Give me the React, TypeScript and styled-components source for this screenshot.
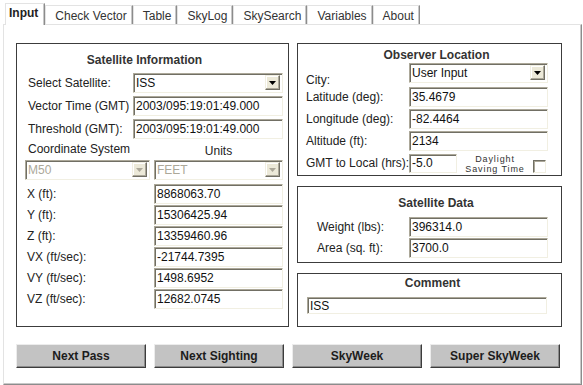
import styled, { createGlobalStyle } from 'styled-components'

const GlobalStyle = createGlobalStyle`
  html, body {
    margin: 0;
    padding: 0;
    background: #ffffff;
  }
  body {
    font-family: 'Liberation Sans', Arial, sans-serif;
    font-size: 12px;
    color: #222222;
  }
  * {
    box-sizing: border-box;
  }
`

const TABS = ['Input', 'Check Vector', 'Table', 'SkyLog', 'SkySearch', 'Variables', 'About']

const SATELLITE_ROWS = [
  { label: 'Vector Time (GMT)', value: '2003/095:19:01:49.000' },
  { label: 'Threshold (GMT):', value: '2003/095:19:01:49.000' },
]

const VECTOR_ROWS = [
  { label: 'X (ft):', value: '8868063.70' },
  { label: 'Y (ft):', value: '15306425.94' },
  { label: 'Z (ft):', value: '13359460.96' },
  { label: 'VX (ft/sec):', value: '-21744.7395' },
  { label: 'VY (ft/sec):', value: '1498.6952' },
  { label: 'VZ (ft/sec):', value: '12682.0745' },
]

const OBSERVER_ROWS = [
  { label: 'Latitude (deg):', value: '35.4679' },
  { label: 'Longitude (deg):', value: '-82.4464' },
  { label: 'Altitude (ft):', value: '2134' },
]

const BUTTONS = ['Next Pass', 'Next Sighting', 'SkyWeek', 'Super SkyWeek']

function Select({ value, disabled = false }: { value: string; disabled?: boolean }) {
  return (
    <SelectBox disabled={disabled}>
      <SelectText>{value}</SelectText>
      <ArrowButton>
        <svg width="7" height="4" viewBox="0 0 7 4">
          <path d="M0 0h7L3.5 4z" fill={disabled ? '#aca899' : '#000'} />
        </svg>
      </ArrowButton>
    </SelectBox>
  )
}

export default function App() {
  return (
    <Window>
      <GlobalStyle />
      <TabStrip>
        {TABS.map((tab, i) => (
          <Tab key={tab} active={i === 0}>
            {tab}
          </Tab>
        ))}
      </TabStrip>
      <Panel>
        <Columns>
          <Box>
            <Title shift={-16} top={9}>
              Satellite Information
            </Title>
            <SatGrid>
              <Label>Select Satellite:</Label>
              <Select value="ISS" />
              {SATELLITE_ROWS.map((row) => (
                <Row key={row.label}>
                  <Label>{row.label}</Label>
                  <Field readOnly value={row.value} />
                </Row>
              ))}
            </SatGrid>
            <CoordGrid>
              <Label>Coordinate System</Label>
              <UnitsLabel>Units</UnitsLabel>
              <Select value="M50" disabled />
              <Select value="FEET" disabled />
            </CoordGrid>
            <VectorGrid>
              {VECTOR_ROWS.map((row) => (
                <Row key={row.label}>
                  <Label>{row.label}</Label>
                  <Field readOnly value={row.value} />
                </Row>
              ))}
            </VectorGrid>
          </Box>

          <RightColumn>
            <Box height={133}>
              <Title shift={14} top={4}>
                Observer Location
              </Title>
              <ObserverGrid>
                <CityLabel>City:</CityLabel>
                <Select value="User Input" />
                {OBSERVER_ROWS.map((row) => (
                  <Row key={row.label}>
                    <Label>{row.label}</Label>
                    <Field readOnly value={row.value} />
                  </Row>
                ))}
                <Label>GMT to Local (hrs):</Label>
                <GmtCell>
                  <ShortField readOnly value="-5.0" />
                  <DaylightText>
                    <span>Daylight</span>
                    <span>Saving Time</span>
                  </DaylightText>
                  <CheckBox />
                </GmtCell>
              </ObserverGrid>
            </Box>

            <Box height={77}>
              <Title shift={13} top={9}>
                Satellite Data
              </Title>
              <DataGrid>
                <Label>Weight (lbs):</Label>
                <Field readOnly value="396314.0" />
                <Label>Area (sq. ft):</Label>
                <Field readOnly value="3700.0" />
              </DataGrid>
            </Box>

            <Box height={54}>
              <Title shift={6} top={2}>
                Comment
              </Title>
              <CommentField readOnly value="ISS" />
            </Box>
          </RightColumn>
        </Columns>

        <ButtonRow>
          {BUTTONS.map((label) => (
            <ActionButton key={label}>{label}</ActionButton>
          ))}
        </ButtonRow>
      </Panel>
    </Window>
  )
}

const Window = styled.div`
  width: 583px;
  height: 385px;
  background: #ffffff;
  overflow: hidden;
`

const TabStrip = styled.div`
  display: flex;
  align-items: flex-end;
  height: 24px;
  padding-left: 5px;
  position: relative;
  z-index: 1;
`

const Tab = styled.div<{ active: boolean }>`
  height: ${({ active }) => (active ? 22 : 19)}px;
  margin-bottom: ${({ active }) => (active ? -1 : 0)}px;
  padding: ${({ active }) => (active ? '2px 6px 0 3px' : '3px 5px 0 9px')};
  background: #ffffff;
  border-top: 1px solid #e3e3e3;
  border-left: 1px solid #e3e3e3;
  border-right: 1px solid #8c8c8c;
  box-shadow: inset -1px 0 0 #c8c8c8;
  font-size: 12px;
  font-weight: ${({ active }) => (active ? 'bold' : 'normal')};
  color: ${({ active }) => (active ? '#222' : '#333')};
  line-height: 14px;
  white-space: nowrap;
`

const Panel = styled.div`
  margin-left: 3px;
  width: 579px;
  height: 361px;
  border-top: 1px solid #e3e3e3;
  border-left: 1px solid #e3e3e3;
  border-right: 1px solid #8c8c8c;
  border-bottom: 1px solid #8c8c8c;
  box-shadow: inset -1px -1px 0 #c8c8c8;
  padding: 18px 0 0 12px;
`

const Columns = styled.div`
  display: grid;
  grid-template-columns: 273px 265px;
  column-gap: 8px;
`

const RightColumn = styled.div`
  display: flex;
  flex-direction: column;
  gap: 10px;
`

const Box = styled.div<{ height?: number }>`
  display: flex;
  flex-direction: column;
  border: 1px solid #3c3c3c;
  height: ${({ height }) => (height ? `${height}px` : 'auto')};
`

const Title = styled.div<{ shift: number; top: number }>`
  padding-top: ${({ top }) => top}px;
  padding-left: ${({ shift }) => Math.max(shift, 0)}px;
  padding-right: ${({ shift }) => Math.max(-shift, 0)}px;
  text-align: center;
  font-weight: bold;
  color: #333333;
  line-height: 14px;
`

const Row = styled.div`
  display: contents;
`

const Label = styled.span`
  color: #222222;
  line-height: 14px;
  white-space: nowrap;
`

const SatGrid = styled.div`
  display: grid;
  grid-template-columns: 105px 150px;
  grid-auto-rows: 20px;
  row-gap: 3px;
  align-items: center;
  margin-top: 6px;
  padding-left: 11px;
`

const CoordGrid = styled.div`
  display: grid;
  grid-template-columns: 125px 129px;
  grid-template-rows: 15px 20px;
  column-gap: 4px;
  row-gap: 3px;
  align-items: start;
  margin-top: 3px;
  padding-left: 8px;

  & > span:first-child {
    padding-left: 3px;
  }
`

const UnitsLabel = styled(Label)`
  padding-top: 2px;
  text-align: center;
`

const VectorGrid = styled.div`
  display: grid;
  grid-template-columns: 127px 129px;
  grid-auto-rows: 20px;
  row-gap: 1px;
  align-items: center;
  margin-top: 4px;
  padding-left: 10px;
`

const ObserverGrid = styled.div`
  display: grid;
  grid-template-columns: 103px 139px;
  grid-template-rows: 22px repeat(4, 20px);
  row-gap: 2px;
  align-items: center;
  margin-top: 1px;
  padding-left: 8px;

  & > div:nth-child(2) {
    align-self: start;
  }
`

const CityLabel = styled(Label)`
  align-self: end;
  margin-bottom: -2px;
`

const GmtCell = styled.div`
  display: flex;
  align-items: center;
  height: 20px;
`

const DaylightText = styled.span`
  display: flex;
  flex-direction: column;
  align-items: center;
  width: 76px;
  margin-top: 2px;
  font-size: 9px;
  line-height: 10px;
  letter-spacing: 0.9px;
  color: #333333;
`

const CheckBox = styled.span`
  width: 13px;
  height: 13px;
  margin-top: 7px;
  background: #ffffff;
  border: 1px solid;
  border-color: #716f64 #f1efe2 #f1efe2 #716f64;
  box-shadow: inset 1px 1px 0 #aca899;
`

const DataGrid = styled.div`
  display: grid;
  grid-template-columns: 92px 139px;
  grid-auto-rows: 20px;
  row-gap: 1px;
  align-items: center;
  margin-top: 7px;
  padding-left: 19px;
`

const Field = styled.input`
  width: 100%;
  height: 20px;
  margin: 0;
  padding: 0 2px;
  border: 1px solid;
  border-color: #aca899 #f1efe2 #f1efe2 #aca899;
  box-shadow: inset 1px 1px 0 #716f64;
  background: #ffffff;
  font-family: 'Liberation Sans', Arial, sans-serif;
  font-size: 12px;
  color: #111111;
  outline: none;
`

const ShortField = styled(Field)`
  width: 48px;
  height: 19px;
`

const CommentField = styled(Field)`
  width: 240px;
  height: 17px;
  margin: 7px 0 0 9px;
`

const SelectBox = styled.div<{ disabled: boolean }>`
  display: flex;
  align-items: center;
  width: 100%;
  height: 20px;
  padding: 1px 2px 2px 2px;
  border: 1px solid;
  border-color: #aca899 #f1efe2 #f1efe2 #aca899;
  box-shadow: inset 1px 1px 0 #716f64;
  background: #ffffff;
  color: ${({ disabled }) => (disabled ? '#aca899' : '#111111')};
`

const SelectText = styled.span`
  flex: 1;
  line-height: 14px;
`

const ArrowButton = styled.span`
  display: flex;
  align-items: center;
  justify-content: center;
  width: 15px;
  height: 15px;
  background: #ece9d8;
  border: 1px solid;
  border-color: #f1efe2 #716f64 #716f64 #f1efe2;
  box-shadow: inset -1px -1px 0 #aca899, inset 1px 1px 0 #ffffff;
`

const ButtonRow = styled.div`
  display: grid;
  grid-template-columns: repeat(4, 130px);
  column-gap: 8px;
  margin-top: 17px;
`

const ActionButton = styled.button`
  height: 24px;
  margin: 0;
  padding: 0;
  background: #c3c3c3;
  border: 1px solid;
  border-color: #ececec #3c3c3c #3c3c3c #ececec;
  box-shadow: inset -1px -1px 0 #8c8c8c;
  font-family: 'Liberation Sans', Arial, sans-serif;
  font-size: 12px;
  font-weight: bold;
  color: #1c1c1c;
  cursor: pointer;
`
